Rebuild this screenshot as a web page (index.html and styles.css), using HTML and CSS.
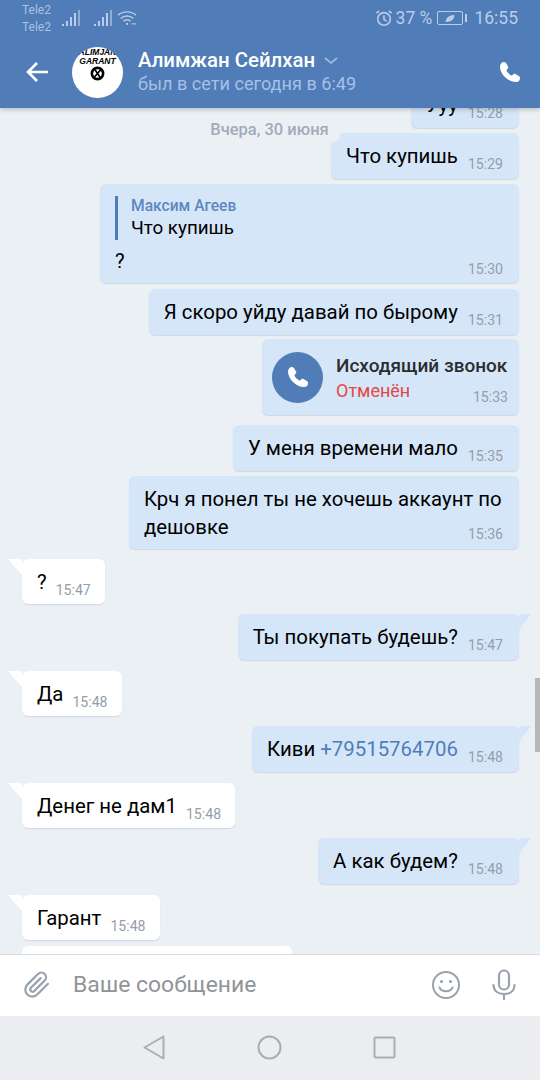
FILE: index.html
```html
<!DOCTYPE html>
<html lang="ru">
<head>
    <meta charset="UTF-8">
    <meta name="viewport" content="width=device-width, initial-scale=1.0">
    <title>Алимжан Сейлхан</title>
    <link rel="stylesheet" href="styles.css">
</head>
<body>
    <header class="top">
        <!-- Status bar -->
        <div class="status-bar">
            <div class="carriers"><span>Tele2</span><span>Tele2</span></div>
            <svg class="signal" width="18" height="18" viewBox="0 0 18 18"><path d="M0 15h2v2H0zM4 12h2v5H4zM8 8h2v9H8zM12 4h2v13h-2z" fill="#b9cde8"/><path d="M16 1h2v16h-2z" fill="#8fadd6"/></svg>
            <svg class="signal second" width="18" height="18" viewBox="0 0 18 18"><path d="M0 15h2v2H0zM4 12h2v5H4zM8 8h2v9H8zM12 4h2v13h-2z" fill="#b9cde8"/><path d="M16 1h2v16h-2z" fill="#8fadd6"/></svg>
            <svg class="wifi" width="20" height="18" viewBox="0 0 22 18" fill="none" stroke="#b9cde8" stroke-width="1.600"><path d="M1 6c5.500-5 14.500-5 20 0"/><path d="M4 9.500c4-3.500 10-3.500 14 0"/><path d="M7 12.500c2.400-2 5.600-2 8 0"/><circle cx="11" cy="15.500" r="1.200" fill="#b9cde8" stroke="none"/><path d="M16 15.500h5" stroke-width="1.200"/></svg>
            <div class="status-right">
                <svg width="18" height="18" viewBox="0 0 20 20" fill="none" stroke="#b9cde8" stroke-width="1.800"><circle cx="10" cy="11" r="7"/><path d="M10 7v4.500l3 2M1.500 4.500 4.500 2M18.500 4.500 15.500 2"/></svg>
                <span class="battery-text">37 %</span>
                <span class="battery"><svg width="14" height="9" viewBox="0 0 16 10"><path d="M3 9C3 4 8 1 13 1c0 5-4 8-10 8z" fill="#b9cde8"/></svg></span>
                <span class="battery-cap"></span>
                <span class="clock">16:55</span>
            </div>
        </div>

        <!-- Dialog title -->
        <div class="title-bar">
            <svg class="back" width="24" height="22" viewBox="0 0 24 22" fill="none" stroke="#fff" stroke-width="2.600"><path d="M23 11H3M12 2l-9 9 9 9"/></svg>
            <div class="avatar">
                <span class="logo-line">ALIMJAN</span>
                <span class="logo-line">GARANT</span>
                <svg width="15" height="15" viewBox="0 0 16 16" fill="none" stroke="#000"><circle cx="8" cy="8" r="6" stroke-width="2.800"/><path d="M5 3.500l6 9M11.500 4l-7 8" stroke-width="1.800"/></svg>
            </div>
            <div class="peer">
                <div class="peer-name">Алимжан Сейлхан<svg width="14" height="7" viewBox="0 0 14 7" fill="none" stroke="#9db9de" stroke-width="1.700"><path d="M1 1l6 5 6-5"/></svg></div>
                <div class="peer-status">был в сети сегодня в 6:49</div>
            </div>
            <svg class="call-btn" width="22" height="22" viewBox="0 0 22 22"><path d="M5 1C3 1 1 3 1 5.500 1 13 9 21 17 21c2.500 0 4-1.500 4-4 0-1.500-1-2-2-2.600L16.500 13c-1.200-.6-2-.2-2.500.6-.5.9-1.200 1.300-2.300.6C10 13 9 12 7.800 10.300c-.6-1.100-.2-1.700.6-2.300.9-.6 1.200-1.400.6-2.500L7.600 3C7 2 6.500 1 5 1z" fill="#fff"/></svg>
        </div>
    </header>

    <main class="chat">
        <div class="date">Вчера, 30 июня</div>
        <div class="scroll-thumb"></div>

        <div class="msg out first"><span class="text">Ууу</span><span class="time">15:28</span></div>
        <div class="msg out"><span class="text">Что купишь</span><span class="time">15:29</span></div>

        <div class="msg out reply-msg">
            <div class="reply">
                <div class="reply-name">Максим Агеев</div>
                <div class="reply-text">Что купишь</div>
            </div>
            <div class="text">?</div>
            <div class="time">15:30</div>
        </div>

        <div class="msg out after-reply"><span class="text">Я скоро уйду давай по бырому</span><span class="time">15:31</span></div>

        <div class="msg out call-msg">
            <div class="call-icon"><svg width="22" height="22" viewBox="0 0 22 22"><path d="M5 1C3 1 1 3 1 5.500 1 13 9 21 17 21c2.500 0 4-1.500 4-4 0-1.500-1-2-2-2.600L16.500 13c-1.200-.6-2-.2-2.500.6-.5.9-1.200 1.300-2.300.6C10 13 9 12 7.800 10.300c-.6-1.100-.2-1.700.6-2.300.9-.6 1.200-1.400.6-2.500L7.600 3C7 2 6.500 1 5 1z" fill="#fff"/></svg></div>
            <div class="call-info">
                <div class="call-title">Исходящий звонок</div>
                <div class="call-bottom"><span class="call-state">Отменён</span><span class="time">15:33</span></div>
            </div>
        </div>

        <div class="msg out gap"><span class="text">У меня времени мало</span><span class="time">15:35</span></div>
        <div class="msg out long"><span class="text">Крч я понел ты не хочешь аккаунт по дешовке</span><span class="time">15:36</span></div>

        <div class="msg in gap tail"><span class="text">?</span><span class="time">15:47</span></div>
        <div class="msg out gap tail"><span class="text">Ты покупать будешь?</span><span class="time">15:47</span></div>
        <div class="msg in gap tail"><span class="text">Да</span><span class="time">15:48</span></div>
        <div class="msg out gap tail"><span class="text">Киви <span class="link">+79515764706</span></span><span class="time">15:48</span></div>
        <div class="msg in gap tail"><span class="text">Денег не дам1</span><span class="time">15:48</span></div>
        <div class="msg out gap tail"><span class="text">А как будем?</span><span class="time">15:48</span></div>
        <div class="msg in gap tail"><span class="text">Гарант</span><span class="time">15:48</span></div>
        <div class="msg in cut"></div>
    </main>

    <!-- Message input -->
    <div class="composer">
        <svg class="clip" width="28" height="30" viewBox="0 0 24 24" fill="none" stroke="#99a2ad" stroke-width="1.900" stroke-linecap="round"><path d="M21.400 11l-9.200 9.200a6 6 0 0 1-8.500-8.500l9.200-9.200a4 4 0 0 1 5.700 5.700l-9.200 9.200a2 2 0 0 1-2.800-2.800l8.500-8.500"/></svg>
        <div class="placeholder">Ваше сообщение</div>
        <svg class="smile" width="28" height="28" viewBox="0 0 28 28" fill="none" stroke="#99a2ad" stroke-width="2"><circle cx="14" cy="14" r="13"/><path d="M7.500 16.500c2.500 5 10.500 5 13 0" stroke-linecap="round"/><circle cx="9.500" cy="10.500" r="1.600" fill="#99a2ad" stroke="none"/><circle cx="18.500" cy="10.500" r="1.600" fill="#99a2ad" stroke="none"/></svg>
        <svg class="mic" width="24" height="31" viewBox="0 0 24 31" fill="none" stroke="#99a2ad" stroke-width="2.200" stroke-linecap="round"><rect x="7" y="1.500" width="10" height="19" rx="5"/><path d="M1.500 16c0 6 4.500 9 10.500 9s10.500-3 10.500-9M12 25v5"/></svg>
    </div>

    <!-- Android navigation -->
    <nav class="nav-bar">
        <svg width="22" height="25" viewBox="0 0 22 25" fill="none" stroke="#abadb2" stroke-width="2" stroke-linejoin="round"><path d="M20.500 1.500v22L1.500 12.500z"/></svg>
        <svg width="25" height="25" viewBox="0 0 25 25" fill="none" stroke="#abadb2" stroke-width="2"><circle cx="12.500" cy="12.500" r="11"/></svg>
        <svg width="23" height="23" viewBox="0 0 23 23" fill="none" stroke="#abadb2" stroke-width="2"><rect x="1.500" y="1.500" width="20" height="20" rx="1"/></svg>
    </nav>
</body>
</html>
```

FILE: styles.css
```css
* {
    box-sizing: border-box;
}

body {
    margin: 0;
    font-family: Roboto, "Noto Sans", sans-serif;
    background-color: #ebf0f5;
    display: flex;
    flex-direction: column;
    height: 1080px;
    overflow: hidden;
}

/* header */
.top {
    position: relative;
    z-index: 2;
    height: 108px;
    background-color: #507cb8;
    box-shadow: 0 1px 5px rgba(0, 0, 0, 0.25);
    flex: none;
}

.status-bar {
    height: 36px;
    display: flex;
    align-items: center;
    padding: 0 22px;
    color: #b9cde8;
}

.carriers {
    display: flex;
    flex-direction: column;
    gap: 3px;
    font-size: 12px;
    line-height: 14px;
    width: 40px;
    margin-top: 1px;
    color: #a9c1e2;
}

.signal.second {
    margin-left: 14px;
}

.wifi {
    margin-left: 5px;
}

.status-right {
    margin-left: auto;
    display: flex;
    align-items: center;
}

.battery-text {
    font-size: 17.500px;
    margin-left: 3px;
}

.battery {
    width: 26px;
    height: 14px;
    margin-left: 5px;
    border: 1px solid #b9cde8;
    border-radius: 2px;
    display: flex;
    align-items: center;
    justify-content: center;
}

.battery-cap {
    width: 2px;
    height: 8px;
    margin: 0 7px 0 2px;
    background-color: #b9cde8;
}

.clock {
    font-size: 17.500px;
}

.title-bar {
    height: 72px;
    display: flex;
    align-items: center;
    padding: 0 19px 0 25px;
}

.avatar {
    width: 51px;
    height: 51px;
    margin-left: 23px;
    border-radius: 50%;
    background-color: #fff;
    overflow: hidden;
    display: flex;
    flex-direction: column;
    align-items: center;
    color: #000;
    flex: none;
}

.logo-line {
    font-family: "Liberation Sans", sans-serif;
    font-size: 8.500px;
    line-height: 9px;
    font-weight: bold;
    font-style: italic;
}

.logo-line:first-child {
    margin-top: 1px;
}

.peer {
    margin-left: 15px;
}

.peer-name {
    color: #fff;
    font-size: 20.400px;
    line-height: 24px;
    font-weight: 500;
}

.peer-name svg {
    margin-left: 9px;
    vertical-align: 3px;
}

.peer-status {
    color: #a6c1e4;
    font-size: 18.100px;
    line-height: 24px;
}

.call-btn {
    margin-left: auto;
}

/* messages */
.chat {
    position: relative;
    flex: 1;
    min-height: 0;
    overflow: hidden;
    display: flex;
    flex-direction: column;
}

.date {
    position: absolute;
    z-index: 1;
    top: 12px;
    left: 199px;
    width: 141px;
    height: 22px;
    border-radius: 7px;
    background-color: #ebf0f5;
    color: #a2abb8;
    font-size: 16.500px;
    font-weight: 500;
    line-height: 20px;
    text-align: center;
}

.scroll-thumb {
    position: absolute;
    top: 570px;
    right: 0;
    width: 5px;
    height: 74px;
    background-color: #b4b6b9;
}

.msg {
    position: relative;
    flex: none;
    display: flex;
    align-items: flex-end;
    gap: 10px;
    min-height: 46px;
    margin-top: 5px;
    padding: 9px 16px 9px 15px;
    border-radius: 6px;
    font-size: 20.400px;
    line-height: 28px;
    color: #000;
    box-shadow: 0 1px 1px rgba(0, 30, 80, 0.12);
}

.msg.first {
    margin-top: -26px;
}

.msg.gap {
    margin-top: 10px;
}

.msg.in.gap {
    margin-top: 11px;
}

.out {
    align-self: flex-end;
    margin-right: 21px;
    background-color: #d5e6f9;
}

.in {
    align-self: flex-start;
    margin-left: 22px;
    background-color: #fff;
    min-height: 45px;
    padding: 9px 14px 8px 15px;
    gap: 9px;
}

.tail::before {
    content: "";
    position: absolute;
    top: 0;
    width: 14px;
    height: 16px;
    background-color: inherit;
}

.in.tail::before {
    left: -14px;
    clip-path: polygon(0 0, 100% 0, 100% 100%);
}

.out.tail::before {
    right: -12px;
    width: 12px;
    clip-path: polygon(0 0, 100% 0, 0 100%);
}

.time {
    color: #959ea9;
    font-size: 14.100px;
    line-height: 16px;
    margin-bottom: -2px;
}

.link {
    color: #4f7db8;
}

.reply-msg {
    display: block;
    width: 419px;
    height: 99px;
    padding-top: 12px;
}

.reply {
    border-left: 3px solid #507cb8;
    padding-left: 13px;
    height: 44px;
    margin-bottom: 8px;
}

.reply-name {
    color: #5d87c0;
    font-size: 15.600px;
    font-weight: 500;
    line-height: 18px;
    padding-top: 1px;
}

.reply-text {
    font-size: 18.800px;
    line-height: 26px;
}

.reply-msg .text {
    line-height: 26px;
}

.reply-msg .time {
    text-align: right;
    margin-top: -13px;
}

.msg.after-reply {
    margin-top: 6px;
}

.long {
    display: block;
    width: 390px;
    height: 73px;
    margin-bottom: -1px;
}

.long .time {
    float: right;
    margin-top: 13px;
}

.msg.call-msg {
    align-items: center;
    gap: 13px;
    height: 76px;
    width: 257px;
    margin-top: 4px;
    padding: 0 11px 0 10px;
}

.call-icon {
    width: 51px;
    height: 51px;
    border-radius: 50%;
    background-color: #507cb8;
    display: flex;
    align-items: center;
    justify-content: center;
    flex: none;
}

.call-info {
    flex: 1;
    margin-top: 3px;
}

.call-title {
    color: #2c2d2e;
    font-size: 19px;
    font-weight: 500;
    line-height: 24px;
    white-space: nowrap;
}

.call-bottom {
    display: flex;
    justify-content: space-between;
    line-height: 26px;
}

.call-state {
    color: #e64646;
    font-size: 18px;
}

.call-bottom .time {
    align-self: flex-end;
    margin-bottom: -1px;
}

.msg.cut {
    width: 270px;
    margin-top: 6px;
}

/* composer */
.composer {
    position: relative;
    z-index: 2;
    flex: none;
    height: 62px;
    display: flex;
    align-items: center;
    padding: 0 24px 2px 23px;
    background-color: #fff;
    border-top: 1px solid #d9dce0;
}

.placeholder {
    margin-left: 22px;
    color: #909499;
    font-size: 22.900px;
}

.smile {
    margin-left: auto;
}

.mic {
    margin-left: 32px;
}

.nav-bar {
    flex: none;
    height: 64px;
    display: flex;
    align-items: center;
    justify-content: space-between;
    padding: 0 144px 2px 143px;
    background-color: #ebedf0;
}
```
